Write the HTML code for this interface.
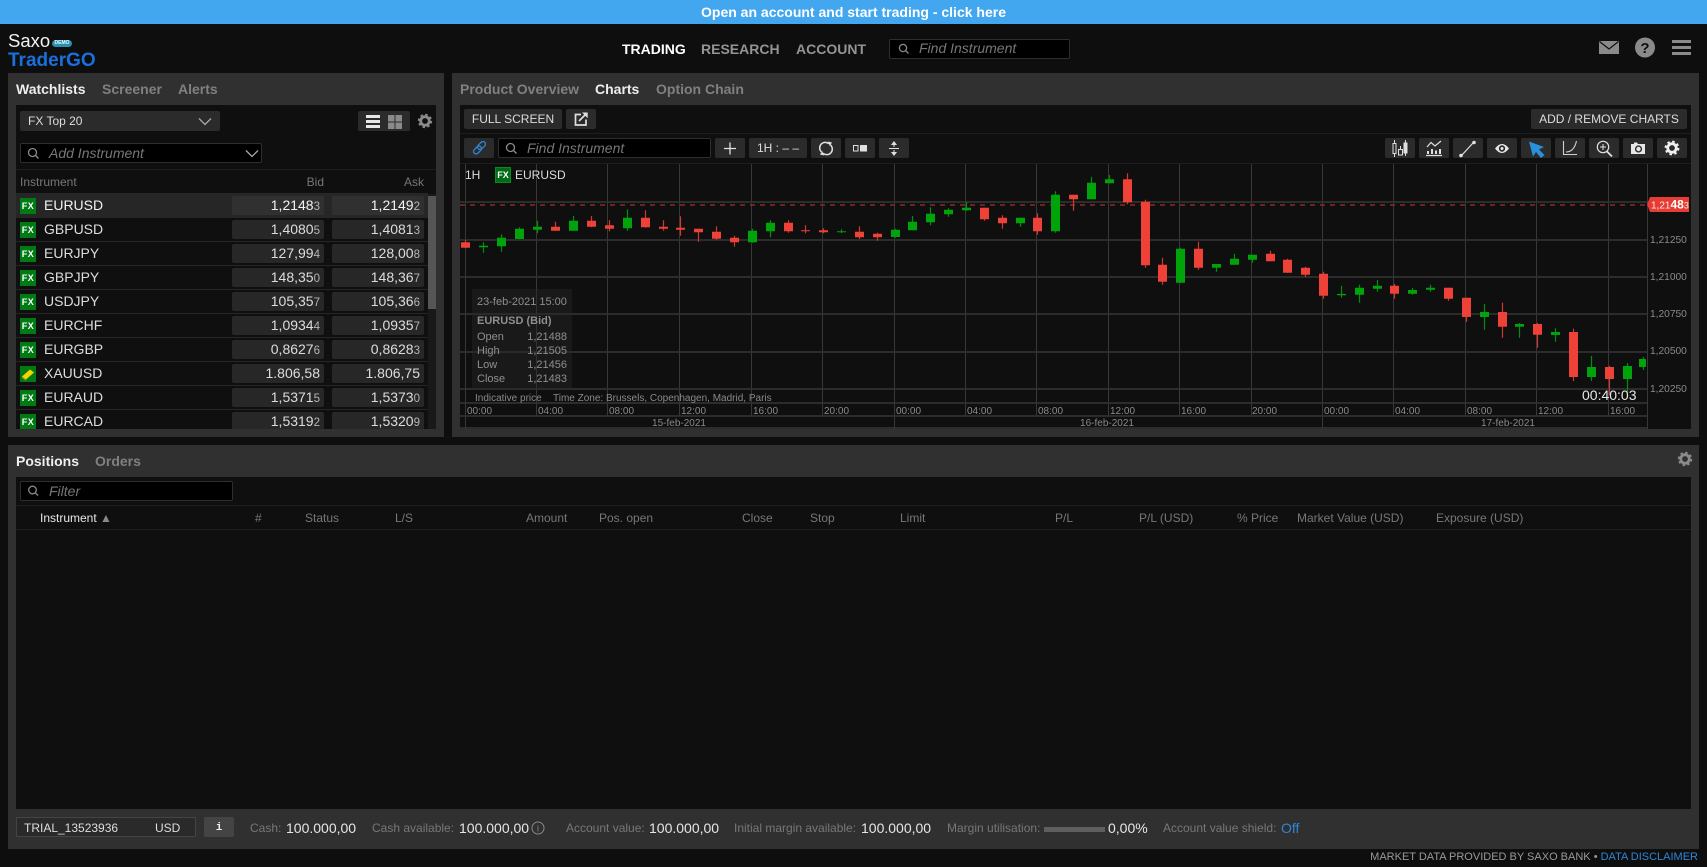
<!DOCTYPE html>
<html><head><meta charset="utf-8"><title>Saxo TraderGO</title>
<style>
html,body{margin:0;padding:0;width:1707px;height:865px;overflow:hidden;background:#0e0e0e;font-family:"Liberation Sans",Arial,sans-serif;color:#ddd}
.a{position:absolute}
.t{position:absolute;white-space:nowrap;line-height:20px}
.panel{position:absolute;background:#303030}
.inner{position:absolute;background:#0f0f0f}
.btn{position:absolute;background:#2b2b2b;border-radius:2px;height:20px;line-height:20px;text-align:center;font-size:12px;color:#ddd}
.inp{position:absolute;background:#000;border:1px solid #2e2e2e;border-radius:2px;box-sizing:border-box;height:20px}
.tab{position:absolute;font-size:14px;font-weight:bold;color:#808080;line-height:20px;white-space:nowrap}
.tab.on{color:#eee}
.line{position:absolute;background:#1e1e1e;height:1px}
.r{position:absolute;left:0;width:412px;height:24px;box-sizing:border-box;border-bottom:1px solid #262626;font-size:14px;color:#ddd}
.r .ic{position:absolute;left:4px;top:4px;width:16px;height:16px;background:#007a15;color:#fff;font:bold 9px/16px "Liberation Sans",sans-serif;text-align:center;letter-spacing:.5px}
.r .n{position:absolute;left:28px;top:0;line-height:22px}
.r .c{position:absolute;top:2px;width:92px;height:19px;background:#272727;border-radius:2px;text-align:right;box-sizing:border-box;padding-right:4px;line-height:18px}
.r .b{left:216px}.r .k{left:316px}
.r small{font-size:11.5px;color:#b5b5b5}
.h{position:absolute;top:508px;font-size:12px;color:#777;line-height:20px;white-space:nowrap}
.l{position:absolute;top:818px;font-size:12px;color:#777;line-height:20px;white-space:nowrap}
.v{position:absolute;top:818px;font-size:14px;color:#e6e6e6;line-height:20px;white-space:nowrap}
svg{position:absolute;left:0;top:0}
</style></head><body>

<!-- banner -->
<div class="a" style="left:0;top:0;width:1707px;height:24px;background:#42a7ef;color:#fff;font-weight:bold;font-size:14px;line-height:24px;text-align:center">Open an account and start trading - click here</div>

<!-- logo -->
<div class="t" style="left:8px;top:30px;font-size:18.5px;color:#f2f2f2;line-height:22px">Saxo</div>
<div class="a" style="left:52px;top:40px;width:20px;height:7px;border-radius:4px;background:#2a8fb0;color:#dff;font:bold 5px/7px 'Liberation Sans',sans-serif;text-align:center">DEMO</div>
<div class="t" style="left:8px;top:50px;font-size:19px;font-weight:bold;color:#1a6fdc;line-height:21px">TraderGO</div>

<!-- nav -->
<div class="t" style="left:622px;top:39px;font-size:14px;font-weight:bold;color:#fff">TRADING</div>
<div class="t" style="left:701px;top:39px;font-size:14px;font-weight:bold;color:#949494">RESEARCH</div>
<div class="t" style="left:796px;top:39px;font-size:14px;font-weight:bold;color:#949494">ACCOUNT</div>
<div class="inp" style="left:889px;top:39px;width:181px"></div>
<div class="t" style="left:919px;top:38px;font-size:14px;font-style:italic;color:#777">Find Instrument</div>

<!-- panels -->
<div class="panel" style="left:8px;top:73px;width:436px;height:364px"></div>
<div class="inner" style="left:16px;top:105px;width:420px;height:324px"></div>
<div class="panel" style="left:452px;top:73px;width:1247px;height:364px"></div>
<div class="inner" style="left:460px;top:105px;width:1231px;height:324px"></div>
<div class="panel" style="left:8px;top:445px;width:1691px;height:404px"></div>
<div class="inner" style="left:16px;top:477px;width:1675px;height:332px"></div>

<!-- left panel -->
<div class="tab on" style="left:16px;top:79px">Watchlists</div>
<div class="tab" style="left:102px;top:79px">Screener</div>
<div class="tab" style="left:178px;top:79px">Alerts</div>
<div class="btn" style="left:20px;top:111px;width:200px;text-align:left;text-indent:8px">FX Top 20</div>
<div class="btn" style="left:358px;top:111px;width:52px"></div>
<div class="inp" style="left:20px;top:143px;width:242px"></div>
<div class="t" style="left:49px;top:143px;font-size:14px;font-style:italic;color:#777">Add Instrument</div>
<div class="line" style="left:16px;top:169px;width:420px"></div>
<div class="t" style="left:20px;top:172px;font-size:12px;color:#777">Instrument</div>
<div class="t" style="right:1383px;top:172px;font-size:12px;color:#777">Bid</div>
<div class="t" style="right:1283px;top:172px;font-size:12px;color:#777">Ask</div>

<div class="a" style="left:16px;top:193px;width:412px;height:236px;overflow:hidden">
<div class="r" style="top:0;height:25px;background:#262626;color:#f2f2f2"><span class="ic" style="top:5px">FX</span><span class="n" style="top:1px">EURUSD</span><span class="c b" style="top:3px;background:#303030">1,2148<small>3</small></span><span class="c k" style="top:3px;background:#303030">1,2149<small>2</small></span></div>
<div class="r" style="top:25px"><span class="ic">FX</span><span class="n">GBPUSD</span><span class="c b">1,4080<small>5</small></span><span class="c k">1,4081<small>3</small></span></div>
<div class="r" style="top:49px"><span class="ic">FX</span><span class="n">EURJPY</span><span class="c b">127,99<small>4</small></span><span class="c k">128,00<small>8</small></span></div>
<div class="r" style="top:73px"><span class="ic">FX</span><span class="n">GBPJPY</span><span class="c b">148,35<small>0</small></span><span class="c k">148,36<small>7</small></span></div>
<div class="r" style="top:97px"><span class="ic">FX</span><span class="n">USDJPY</span><span class="c b">105,35<small>7</small></span><span class="c k">105,36<small>6</small></span></div>
<div class="r" style="top:121px"><span class="ic">FX</span><span class="n">EURCHF</span><span class="c b">1,0934<small>4</small></span><span class="c k">1,0935<small>7</small></span></div>
<div class="r" style="top:145px"><span class="ic">FX</span><span class="n">EURGBP</span><span class="c b">0,8627<small>6</small></span><span class="c k">0,8628<small>3</small></span></div>
<div class="r" style="top:169px"><span class="ic"><svg width="16" height="16" viewBox="0 0 16 16"><path d="M2 10.5 10 3.5 14 6.5 6 13.5Z" fill="#f2d600"/><path d="M2 10.5 6 13.5 6 14.8 2 11.8Z" fill="#b09a00"/></svg></span><span class="n">XAUUSD</span><span class="c b">1.806,58</span><span class="c k">1.806,75</span></div>
<div class="r" style="top:193px"><span class="ic">FX</span><span class="n">EURAUD</span><span class="c b">1,5371<small>5</small></span><span class="c k">1,5373<small>0</small></span></div>
<div class="r" style="top:217px"><span class="ic">FX</span><span class="n">EURCAD</span><span class="c b">1,5319<small>2</small></span><span class="c k">1,5320<small>9</small></span></div>
</div>
<div class="a" style="left:428px;top:194px;width:8px;height:235px;background:#191919"></div>
<div class="a" style="left:428px;top:196px;width:8px;height:113px;background:#555"></div>

<!-- right panel tabs/toolbars -->
<div class="tab" style="left:460px;top:79px">Product Overview</div>
<div class="tab on" style="left:595px;top:79px">Charts</div>
<div class="tab" style="left:656px;top:79px">Option Chain</div>
<div class="btn" style="left:464px;top:109px;width:98px">FULL SCREEN</div>
<div class="btn" style="left:566px;top:109px;width:30px"></div>
<div class="btn" style="left:1531px;top:109px;width:156px">ADD / REMOVE CHARTS</div>
<div class="line" style="left:460px;top:133px;width:1231px"></div>
<div class="btn" style="left:464px;top:138px;width:30px"></div>
<div class="inp" style="left:498px;top:138px;width:213px"></div>
<div class="t" style="left:527px;top:138px;font-size:14px;font-style:italic;color:#777">Find Instrument</div>
<div class="btn" style="left:715px;top:138px;width:30px"></div>
<div class="btn" style="left:749px;top:138px;width:58px">1H : – –</div>
<div class="btn" style="left:811px;top:138px;width:30px"></div>
<div class="btn" style="left:845px;top:138px;width:30px"></div>
<div class="btn" style="left:879px;top:138px;width:30px"></div>
<div class="btn" style="left:1385px;top:138px;width:30px"></div>
<div class="btn" style="left:1419px;top:138px;width:30px"></div>
<div class="btn" style="left:1453px;top:138px;width:30px"></div>
<div class="btn" style="left:1487px;top:138px;width:30px"></div>
<div class="btn" style="left:1521px;top:138px;width:30px"></div>
<div class="btn" style="left:1555px;top:138px;width:30px"></div>
<div class="btn" style="left:1589px;top:138px;width:30px"></div>
<div class="btn" style="left:1623px;top:138px;width:30px"></div>
<div class="btn" style="left:1657px;top:138px;width:30px"></div>
<div class="line" style="left:460px;top:163px;width:1231px"></div>

<!-- chart + icons -->
<svg width="1707" height="865" viewBox="0 0 1707 865" font-family="Liberation Sans, Arial, sans-serif">
<!-- grid -->
<path stroke="#383838" stroke-width="1" fill="none" shape-rendering="crispEdges" d="M465.5 164V429M536.5 164V416M607.5 164V416M679.5 164V416M751.5 164V416M822.5 164V416M894.5 164V429M965.5 164V416M1036.5 164V416M1108.5 164V416M1179.5 164V416M1251.5 164V416M1322.5 164V429M1393.5 164V416M1465.5 164V416M1536.5 164V416M1608.5 164V416M1647.5 164V429"/>
<path stroke="#303030" stroke-width="1.7" fill="none" d="M460 202H1647M460 240H1647M460 277H1647M460 314H1647M460 352H1647M460 389H1647M460 403H1647M460 416H1647M460 428H1647"/>
<path stroke="#8a2c29" stroke-width="1.4" stroke-dasharray="5 5" d="M460 205H1648"/>
<!-- candle wicks -->
<path stroke="#008f0a" stroke-width="1.2" fill="none" d="M483.5 242.3V252.7M501.5 234.3V251.7M519.5 227.3V239.3M537.5 220.7V233.3M573.5 216V230.7M627.5 209.3V230.7M752.5 228.7V242.7M770.5 220.3V237.3M841.5 229.3V233M895.5 228.7V237.7M912.5 216V230.3M930.5 207.3V225.3M948.5 208.3V216.7M966.5 201.7V211M1020.5 217.7V226.7M1055.5 191.3V232.7M1091.5 176.7V199.3M1109.5 175V183.3M1180.5 247.7V282.7M1216.5 264V271.7M1234.5 253.7V264.7M1252.5 254.7V262.7M1341.5 285.7V297.7M1359.5 284.7V302.7M1377.5 280V291.7M1412.5 288V294.7M1430.5 284.7V291.7M1484.5 304V329.7M1519.5 323V337.7M1555.5 328.3V341.7M1591.5 356V381M1627.5 363V393.3M1643.5 357V370"/>
<path stroke="#cc3a32" stroke-width="1.2" fill="none" d="M465.5 240V248M555.5 221.7V230.7M591.5 216V227.3M609.5 220.3V231.3M645.5 210.3V227.7M663.5 220.3V230.7M680.5 216.3V235.7M698.5 228.7V241.7M716.5 226.3V239.7M734.5 235.7V246.7M788.5 220.3V232.7M805.5 225.3V233.3M823.5 228.3V233.3M859.5 226.3V239M877.5 232.7V240.7M984.5 207.7V220.7M1002.5 215.3V228.7M1037.5 213.3V234.7M1073.5 194.7V210.7M1127.5 173.3V204.3M1145.5 199.7V267.7M1162.5 257.7V284.7M1198.5 241.7V269.7M1270.5 250.7V261.3M1287.5 258.7V272.7M1305.5 266.7V277M1323.5 271.7V298.7M1394.5 283.7V298.7M1448.5 287.7V300.7M1466.5 297.7V321.7M1502.5 302.7V337.7M1537.5 323V347.7M1573.5 328.7V381M1609.5 366V395"/>
<!-- candle bodies -->
<path stroke="#00a30a" stroke-width="9" fill="none" d="M483.5 245.7V247.3M501.5 237.7V246.3M519.5 228.7V239M537.5 226.7V229.7M573.5 220.7V230.7M627.5 217.7V228.3M752.5 230.7V242.3M770.5 222.7V231.3M841.5 231.3V232.3M895.5 229.7V237M912.5 221.7V230.3M930.5 213.7V222.3M948.5 209.7V214.3M966.5 207.7V210.3M1020.5 217.7V223.3M1055.5 194.7V231.3M1091.5 182.7V199.3M1109.5 179.3V183.3M1180.5 248.7V282.7M1216.5 264V267.7M1234.5 258.7V264.7M1252.5 254.7V259.7M1341.5 294V295.3M1359.5 287.7V294.7M1377.5 285.7V288.7M1412.5 290V293.7M1430.5 287.7V289.7M1484.5 312V317M1519.5 324V326.7M1555.5 332V335M1591.5 367V377M1627.5 366V379"/>
<rect x="1639" y="359" width="7" height="8" fill="#00a30a"/>
<path stroke="#ee4137" stroke-width="9" fill="none" d="M465.5 242.3V247.7M555.5 226.7V230.7M591.5 220.7V226.7M609.5 225.3V228.7M645.5 217.7V227.3M663.5 226.7V228.7M680.5 227.7V229.7M698.5 228.7V232.3M716.5 231.7V238.7M734.5 237.7V242.3M788.5 222.7V231.3M805.5 230.3V231.3M823.5 230.3V232.3M859.5 231.7V237.3M877.5 233.7V237.3M984.5 207.7V219.3M1002.5 217.7V223.3M1037.5 217.7V231.3M1073.5 194.7V199.3M1127.5 179.3V202.3M1145.5 201.7V265.3M1162.5 264.7V281.7M1198.5 248.7V267.7M1270.5 253.7V261.3M1287.5 259.7V272.7M1305.5 267.7V274.7M1323.5 273.7V295.7M1394.5 285.7V293.7M1448.5 287.7V298.7M1466.5 297.7V317M1502.5 312V326.7M1537.5 324V334.7M1573.5 332V377M1609.5 367V379"/>
<!-- axis labels -->
<g font-size="10" fill="#8a8a8a">
<text x="467" y="414">00:00</text><text x="538" y="414">04:00</text><text x="609" y="414">08:00</text><text x="681" y="414">12:00</text><text x="753" y="414">16:00</text><text x="824" y="414">20:00</text><text x="896" y="414">00:00</text><text x="967" y="414">04:00</text><text x="1038" y="414">08:00</text><text x="1110" y="414">12:00</text><text x="1181" y="414">16:00</text><text x="1252" y="414">20:00</text><text x="1324" y="414">00:00</text><text x="1395" y="414">04:00</text><text x="1467" y="414">08:00</text><text x="1538" y="414">12:00</text><text x="1610" y="414">16:00</text>
<text x="679" y="426" text-anchor="middle">15-feb-2021</text><text x="1107" y="426" text-anchor="middle">16-feb-2021</text><text x="1508" y="426" text-anchor="middle">17-feb-2021</text>
<text x="475" y="401">Indicative price</text><text x="553" y="401">Time Zone: Brussels, Copenhagen, Madrid, Paris</text>
</g>
<g font-size="10.2" fill="#8a8a8a">
<text x="1650" y="243">1,21250</text><text x="1650" y="280">1,21000</text><text x="1650" y="317">1,20750</text><text x="1650" y="354">1,20500</text><text x="1650" y="392">1,20250</text>
</g>
<path fill="#e63c33" d="M1647 204.5 1650 197H1689V212H1650Z"/>
<text x="1651" y="208.5" fill="#fbeaea" font-size="10">1,21<tspan font-weight="bold" font-size="12" fill="#fff">48</tspan><tspan font-size="9">3</tspan></text>
<text x="1582" y="400" fill="#e6e6e6" font-size="14">00:40:03</text>

<!-- chart legend -->
<text x="465" y="179" fill="#ddd" font-size="12">1H</text>
<rect x="495.5" y="167.5" width="15" height="15" fill="#006b16" stroke="#0a8a22"/>
<text x="503" y="178" fill="#fff" font-size="9" font-weight="bold" text-anchor="middle">FX</text>
<text x="515" y="179" fill="#ddd" font-size="12">EURUSD</text>

<!-- top right icons -->
<rect x="1599" y="41" width="20" height="13" fill="#8a8a8a"/><path d="M1599.5 41.5 1609 49 1618.5 41.5" fill="none" stroke="#0e0e0e" stroke-width="1.2"/>
<circle cx="1645" cy="47.5" r="10" fill="#8a8a8a"/><text x="1645" y="53" fill="#0e0e0e" font-size="15" font-weight="bold" text-anchor="middle">?</text>
<path d="M1672 41.5H1691M1672 47.5H1691M1672 53.5H1691" stroke="#8a8a8a" stroke-width="3"/>
<!-- search icons -->
<g fill="none" stroke="#8a8a8a" stroke-width="1.3">
<circle cx="903" cy="48" r="3.6"/><path d="M905.7 50.7 908.5 53.5"/>
<circle cx="32.5" cy="152.5" r="4"/><path d="M35.5 155.5 38.5 158.5"/>
<circle cx="510.5" cy="147.5" r="4"/><path d="M513.5 150.5 516.5 153.5"/>
<!-- chevrons -->
<path d="M199 118.5 205 124.5 211 118.5M246 150.5 252 156.5 258 150.5" stroke="#aaa"/>
</g>
<!-- list/grid toggle + gear -->
<path d="M366 116.5H380M366 121.5H380M366 126.5H380" stroke="#e8e8e8" stroke-width="3"/>
<path fill="#8a8a8a" d="M388 115h6.5v6.5H388zM395.5 115h6.5v6.5h-6.5zM388 122.5h6.5v6.5H388zM395.5 122.5h6.5v6.5h-6.5z"/>
<g fill="none" stroke="#8a8a8a"><circle cx="425" cy="121" r="4.3" stroke-width="2.8"/><circle cx="425" cy="121" r="6" stroke-width="2.4" stroke-dasharray="2.36 2.35"/></g>
<g fill="none" stroke="#8a8a8a"><circle cx="1685" cy="459" r="4.3" stroke-width="2.8"/><circle cx="1685" cy="459" r="6" stroke-width="2.4" stroke-dasharray="2.36 2.35"/></g>
<!-- external link -->
<g fill="none" stroke="#e0e0e0" stroke-width="1.7"><path d="M581 114.5H575.5V125H586V119.5"/><path d="M579 121 586 114"/></g><path d="M582 112.5H587.7V118.2Z" fill="#e0e0e0"/>
<!-- chain -->
<g fill="none" stroke="#2e86d6" stroke-width="1.3"><rect x="473" y="147.5" width="9" height="5" rx="2.4" transform="rotate(-45 477.5 150)"/><rect x="477" y="143" width="9" height="5" rx="2.4" transform="rotate(-45 481.5 145.5)"/></g>
<!-- plus -->
<path d="M724 148.5H736M730 142.5V154.5" stroke="#e0e0e0" stroke-width="1.3"/>
<!-- refresh -->
<g fill="none" stroke="#e0e0e0" stroke-width="1.5"><path d="M821.5 152A5.4 5.4 0 0 1 829 143.8"/><path d="M830.5 145A5.4 5.4 0 0 1 823 153.2"/></g><path fill="#e0e0e0" d="M828 141.5 832 142.5 829.8 146ZM824 155.5 820 154.5 822.2 151Z"/>
<!-- compare -->
<rect x="853.5" y="145.5" width="4.5" height="5.5" fill="none" stroke="#e0e0e0"/><rect x="860" y="145" width="7" height="6.5" fill="#e0e0e0"/>
<!-- fit -->
<path d="M889 148.5H899" stroke="#e0e0e0"/><path fill="#e0e0e0" d="M894 141 897 145H891ZM894 156 891 152H897Z"/><path d="M894 144V147M894 150V153" stroke="#e0e0e0"/>
<!-- candle tool -->
<g stroke="#e0e0e0" fill="none"><path d="M1394.5 140V157M1400.5 146V150M1405.5 140V156"/><rect x="1393" y="143.5" width="3" height="10" fill="#2b2b2b"/><rect x="1398.5" y="149.5" width="4" height="5.5" fill="#2b2b2b"/><rect x="1404" y="143" width="3" height="10" fill="#e0e0e0"/></g>
<!-- indicators -->
<path d="M1427 147 1431 142.5 1435 146 1441 141" fill="none" stroke="#e0e0e0" stroke-width="1.2"/><path d="M1426 155.5H1442" stroke="#e0e0e0" stroke-width="1.2"/><path d="M1427 154V151H1429V154ZM1431 154V149H1433V154ZM1435 154V150.5H1437V154ZM1439 154V149H1441V154Z" fill="#e0e0e0"/>
<!-- line tool -->
<path d="M1462 155 1473 143" stroke="#e0e0e0" stroke-width="1.2"/><circle cx="1461" cy="155.5" r="1.8" fill="#e0e0e0"/><circle cx="1474" cy="142.5" r="1.8" fill="#e0e0e0"/>
<!-- eye -->
<path d="M1495 148.5Q1502 139.5 1509 148.5Q1502 157.5 1495 148.5Z" fill="#e8e8e8"/><circle cx="1502" cy="148.5" r="3.2" fill="#2b2b2b"/><circle cx="1502" cy="148.5" r="1.5" fill="#e8e8e8"/>
<!-- cursor -->
<path d="M1529 141.5 1544 147 1539 149.5 1544.5 155 1541 158 1536 152 1533 156.5Z" fill="#2a90dc"/>
<!-- curve -->
<path d="M1563.5 141V154.5H1577" fill="none" stroke="#d0d0d0" stroke-width="1.1"/><path d="M1566 152Q1574 152 1576.5 141" fill="none" stroke="#d0d0d0" stroke-width="1.1"/>
<!-- magnifier -->
<circle cx="1603" cy="147" r="5.7" fill="none" stroke="#e0e0e0" stroke-width="1.2"/><path d="M1607 151.5 1612 156.5" stroke="#e0e0e0" stroke-width="1.8"/><path d="M1600 147H1606M1603 144V150" stroke="#e0e0e0"/>
<!-- camera -->
<path d="M1631 144h3v-1.5h3l1 1.5h7v10h-14Z" fill="#e8e8e8"/><circle cx="1638.5" cy="149" r="3.6" fill="#2b2b2b"/><circle cx="1638.5" cy="149" r="2.2" fill="#e8e8e8"/>
<!-- gear white -->
<g fill="none" stroke="#efefef"><circle cx="1672" cy="148" r="4.3" stroke-width="2.8"/><circle cx="1672" cy="148" r="6.2" stroke-width="2.4" stroke-dasharray="2.43 2.44"/></g>
<!-- info -->
<circle cx="538" cy="828" r="6" fill="none" stroke="#888"/><text x="538" y="831.5" fill="#888" font-size="9" text-anchor="middle">i</text>
<!-- margin bar -->
<rect x="1044" y="827" width="61" height="5" fill="#5f5f5f"/>
</svg>

<!-- tooltip -->
<div class="a" style="left:472px;top:289px;width:100px;height:101px;background:rgba(40,40,40,.42);font-size:11px;color:#8f8f8f">
<div class="t" style="left:5px;top:3px">23-feb-2021 15:00</div>
<div class="t" style="left:5px;top:22px;font-weight:bold">EURUSD (Bid)</div>
<div class="t" style="left:5px;top:38px">Open</div><div class="t" style="right:5px;top:38px">1,21488</div>
<div class="t" style="left:5px;top:52px">High</div><div class="t" style="right:5px;top:52px">1,21505</div>
<div class="t" style="left:5px;top:66px">Low</div><div class="t" style="right:5px;top:66px">1,21456</div>
<div class="t" style="left:5px;top:80px">Close</div><div class="t" style="right:5px;top:80px">1,21483</div>
</div>

<!-- positions -->
<div class="tab on" style="left:16px;top:451px">Positions</div>
<div class="tab" style="left:95px;top:451px">Orders</div>
<div class="inp" style="left:20px;top:481px;width:213px"></div>
<svg width="60" height="520" style="left:0;top:0"><g fill="none" stroke="#8a8a8a" stroke-width="1.3"><circle cx="32.5" cy="490" r="3.8"/><path d="M35.3 492.8 38 495.5"/></g></svg>
<div class="t" style="left:49px;top:481px;font-size:14px;font-style:italic;color:#777">Filter</div>
<div class="line" style="left:16px;top:505px;width:1675px"></div>
<div class="line" style="left:16px;top:529px;width:1675px"></div>
<div class="h" style="left:40px;color:#e8e8e8">Instrument <span style="color:#888">▲</span></div>
<div class="h" style="left:255px">#</div>
<div class="h" style="left:305px">Status</div>
<div class="h" style="left:395px">L/S</div>
<div class="h" style="left:526px">Amount</div>
<div class="h" style="left:599px">Pos. open</div>
<div class="h" style="left:742px">Close</div>
<div class="h" style="left:810px">Stop</div>
<div class="h" style="left:900px">Limit</div>
<div class="h" style="left:1055px">P/L</div>
<div class="h" style="left:1139px">P/L (USD)</div>
<div class="h" style="left:1237px">% Price</div>
<div class="h" style="left:1297px">Market Value (USD)</div>
<div class="h" style="left:1436px">Exposure (USD)</div>

<!-- account bar -->
<div class="a" style="left:16px;top:817px;width:180px;height:20px;box-sizing:border-box;border:1px solid #444;background:#2a2a2a"></div>
<div class="t" style="left:24px;top:818px;font-size:12px;color:#ddd">TRIAL_13523936</div>
<div class="t" style="left:155px;top:818px;font-size:12px;color:#ddd">USD</div>
<div class="a" style="left:204px;top:817px;width:30px;height:20px;background:#444;border-radius:2px;color:#eee;font:bold 11px/23px 'Liberation Mono',monospace;text-align:center">i</div>
<div class="l" style="left:250px">Cash:</div><div class="v" style="left:286px">100.000,00</div>
<div class="l" style="left:372px">Cash available:</div><div class="v" style="left:459px">100.000,00</div>
<div class="l" style="left:566px">Account value:</div><div class="v" style="left:649px">100.000,00</div>
<div class="l" style="left:734px">Initial margin available:</div><div class="v" style="left:861px">100.000,00</div>
<div class="l" style="left:947px">Margin utilisation:</div><div class="v" style="left:1108px">0,00%</div>
<div class="l" style="left:1163px">Account value shield:</div><div class="v" style="left:1281px;color:#2e86d6">Off</div>

<!-- footer -->
<div class="t" style="right:9px;top:847px;font-size:11px;color:#999">MARKET DATA PROVIDED BY SAXO BANK • <span style="color:#2e86d6">DATA DISCLAIMER</span></div>
</body></html>
